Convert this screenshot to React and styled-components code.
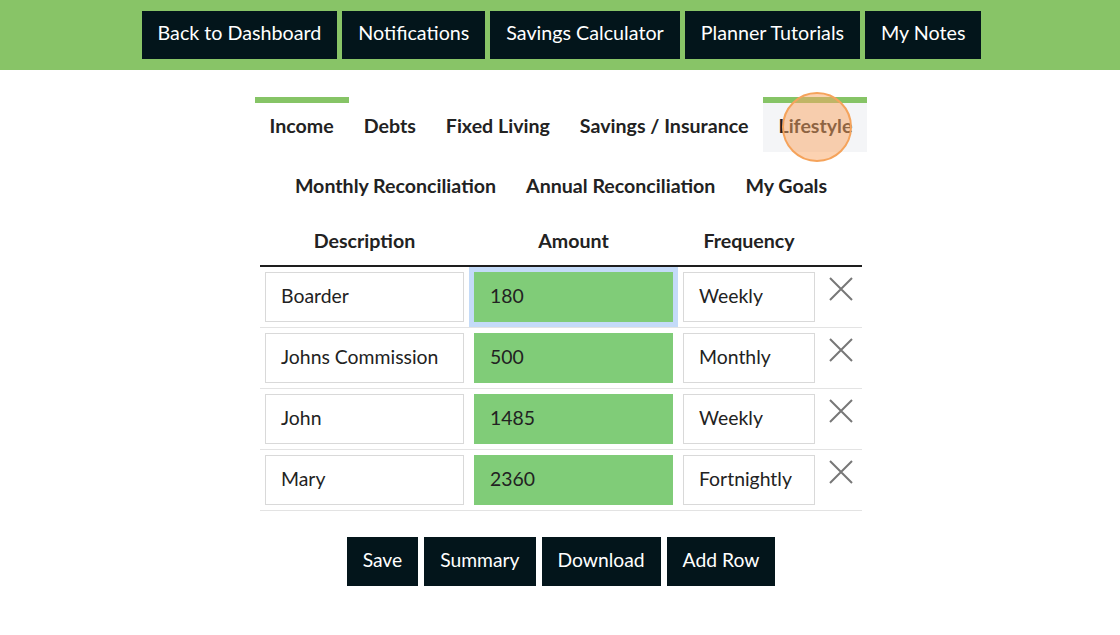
import React from "react";
import styled, { createGlobalStyle } from "styled-components";

const GlobalStyle = createGlobalStyle`
  body {
    margin: 0;
    background: #ffffff;
    color: #222222;
    font-family: Lato, "Open Sans", sans-serif;
  }
`;

const TopBar = styled.header`
  align-items: flex-start;
  background: #88c467;
  box-sizing: border-box;
  display: flex;
  gap: 5px;
  height: 70px;
  justify-content: center;
  padding-left: 3px;
  padding-top: 11px;
`;

const DarkButton = styled.button`
  background: #03151b;
  border: none;
  color: #ffffff;
  cursor: pointer;
  font-family: Lato, sans-serif;
  font-size: ${(p) => p.$size}px;
  height: ${(p) => p.$height}px;
  padding: 0 16px 5px;
`;

const Main = styled.main`
  margin: 0 auto;
  padding-left: 2px;
  padding-top: 27px;
  width: 602px;
`;

const TabRow = styled.nav`
  display: flex;
  justify-content: center;
  margin: 0 -40px 5px;
`;

const Tab = styled.div`
  background: ${(p) => (p.$active ? "#f4f5f7" : "transparent")};
  border-top: 6px solid ${(p) => (p.$marked ? "#86c466" : "transparent")};
  font-size: 19.6px;
  font-weight: 700;
  line-height: 24px;
  padding: 11px 15px 14px;
  position: relative;
  white-space: nowrap;
`;

const Cursor = styled.span`
  background: rgba(250, 165, 100, 0.5);
  border: 2px solid #f5a35b;
  border-radius: 50%;
  box-sizing: border-box;
  height: 70px;
  left: 19px;
  position: absolute;
  top: -11px;
  width: 70px;
`;

const Table = styled.table`
  border-collapse: collapse;
  table-layout: fixed;
  width: 100%;
`;

const Head = styled.th`
  border-bottom: 2px solid #1e1e1e;
  box-sizing: border-box;
  font-size: 19.6px;
  font-weight: 700;
  line-height: 24px;
  padding: 12px 5px;
  text-align: center;
  width: ${(p) => (p.$w ? `${p.$w}px` : "auto")};
`;

const Row = styled.tr`
  border-bottom: 1px solid #e3e3e3;
`;

const Cell = styled.td`
  box-sizing: border-box;
  padding: 5px;
  vertical-align: top;
`;

const Field = styled.div`
  align-items: center;
  background: ${(p) => (p.$amount ? "#80cc78" : "#ffffff")};
  border: 1px solid ${(p) => (p.$amount ? "#80cc78" : "#d9d9d9")};
  box-shadow: ${(p) => (p.$focus ? "0 0 0 5px #c4dbf8" : "none")};
  box-sizing: border-box;
  display: flex;
  font-size: 19.4px;
  height: 50px;
  padding: 0 15px 3px;
  white-space: nowrap;
`;

const RemoveButton = styled.button`
  background: none;
  border: none;
  display: block;
  margin: 5px auto 0;
  padding: 0;
`;

const Actions = styled.div`
  display: flex;
  gap: 6px;
  justify-content: center;
  margin-top: 26px;
`;

const Cross = () => (
  <svg width="24" height="24" viewBox="0 0 24 24">
    <path d="M1 1 L23 23 M23 1 L1 23" stroke="#777777" strokeWidth="2" fill="none" />
  </svg>
);

const rows = [
  { desc: "Boarder", amount: "180", freq: "Weekly", focus: true },
  { desc: "Johns Commission", amount: "500", freq: "Monthly" },
  { desc: "John", amount: "1485", freq: "Weekly" },
  { desc: "Mary", amount: "2360", freq: "Fortnightly" },
];

export default function App() {
  return (
    <>
      <GlobalStyle />
      <TopBar>
        {["Back to Dashboard", "Notifications", "Savings Calculator", "Planner Tutorials", "My Notes"].map((t) => (
          <DarkButton key={t} $height={48} $size={19.7}>{t}</DarkButton>
        ))}
      </TopBar>
      <Main>
        <TabRow>
          <Tab $marked>Income</Tab>
          <Tab>Debts</Tab>
          <Tab>Fixed Living</Tab>
          <Tab>Savings / Insurance</Tab>
          <Tab $marked $active>
            Lifestyle
            <Cursor />
          </Tab>
        </TabRow>
        <TabRow>
          <Tab>Monthly Reconciliation</Tab>
          <Tab>Annual Reconciliation</Tab>
          <Tab>My Goals</Tab>
        </TabRow>
        <Table>
          <thead>
            <tr>
              <Head $w={209}>Description</Head>
              <Head $w={209}>Amount</Head>
              <Head $w={142}>Frequency</Head>
              <Head />
            </tr>
          </thead>
          <tbody>
            {rows.map((r) => (
              <Row key={r.desc}>
                <Cell><Field>{r.desc}</Field></Cell>
                <Cell><Field $amount $focus={r.focus}>{r.amount}</Field></Cell>
                <Cell><Field>{r.freq}</Field></Cell>
                <Cell>
                  <RemoveButton aria-label="Remove row"><Cross /></RemoveButton>
                </Cell>
              </Row>
            ))}
          </tbody>
        </Table>
        <Actions>
          {["Save", "Summary", "Download", "Add Row"].map((t) => (
            <DarkButton key={t} $height={49} $size={19.3}>{t}</DarkButton>
          ))}
        </Actions>
      </Main>
    </>
  );
}
